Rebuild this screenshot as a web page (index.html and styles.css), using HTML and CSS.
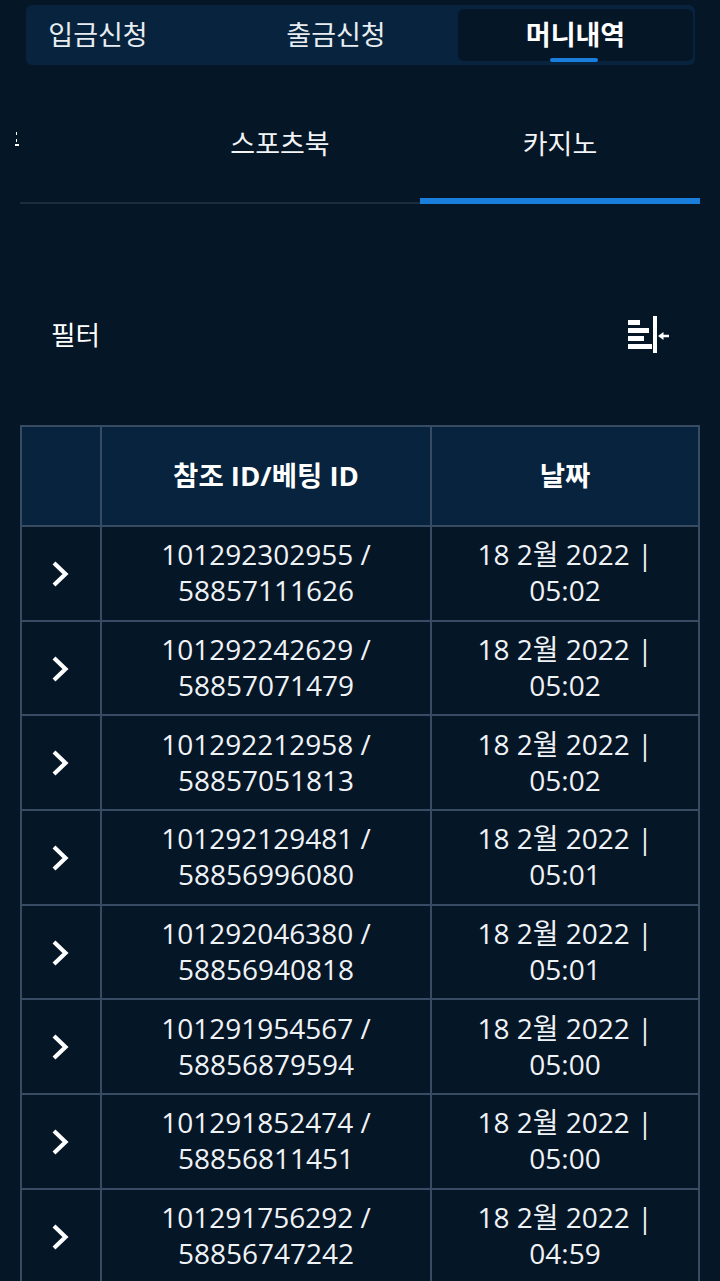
FILE: index.html
```html
<!DOCTYPE html>
<html lang="ko">
<head>
  <meta charset="UTF-8" />
  <title>머니내역</title>
  <link rel="stylesheet" href="styles.css">
</head>
<body>
  <nav class="topTabs">
    <a class="topTab first">입금신청</a>
    <a class="topTab second">출금신청</a>
    <a class="topTab active">머니내역</a>
  </nav>

  <nav class="subTabs">
    <a class="subTab clipped">
      <svg class="clipMark" width="5" height="16" viewBox="0 0 5 16"><path d="M1 0h1v3H1zM1 7h1v3H1zM0 12h4v2H0z" fill="#fff"/></svg>
    </a>
    <a class="subTab">스포츠북</a>
    <a class="subTab active">카지노</a>
  </nav>

  <div class="filterRow">
    <span class="filterLabel">필터</span>
    <svg width="41" height="37" viewBox="0 0 41 37">
      <g fill="#fff">
        <rect x="0" y="4" width="12" height="5"/>
        <rect x="0" y="12" width="21" height="5"/>
        <rect x="0" y="20" width="16" height="5"/>
        <rect x="0" y="28" width="24" height="5"/>
        <rect x="25" y="0" width="4" height="37"/>
        <path d="M30 20l5.500-4v2.700h5.500v2.600h-5.500v2.700z"/>
      </g>
    </svg>
  </div>

  <table class="betTable">
    <thead>
      <tr>
        <th class="arrowCol"></th>
        <th class="idCol">참조 ID/베팅 ID</th>
        <th>날짜</th>
      </tr>
    </thead>
    <tbody id="rows"></tbody>
  </table>

  <script>
    const rows = [
      ["101292302955", "58857111626", "05:02"],
      ["101292242629", "58857071479", "05:02"],
      ["101292212958", "58857051813", "05:02"],
      ["101292129481", "58856996080", "05:01"],
      ["101292046380", "58856940818", "05:01"],
      ["101291954567", "58856879594", "05:00"],
      ["101291852474", "58856811451", "05:00"],
      ["101291756292", "58856747242", "04:59"],
    ];
    const arrow = '<svg width="18" height="26" viewBox="0 0 18 26"><path d="M3 2L14.500 13 3 24" fill="none" stroke="#fff" stroke-width="4.200"/></svg>';
    document.getElementById("rows").innerHTML = rows.map((r) =>
      `<tr><td class="arrowCell">${arrow}</td><td>${r[0]} /<br>${r[1]}</td><td>18 2월 2022 |<br>${r[2]}</td></tr>`
    ).join("");
  </script>
</body>
</html>
```

FILE: styles.css
```css
html, body {
  height: 1281px;
  overflow: hidden;
}
body {
  margin: 0;
  background-color: #051627;
  color: #fff;
  font-family: "Open Sans", "Noto Sans CJK KR", sans-serif;
}
a {
  display: block;
}
.topTabs {
  display: flex;
  height: 60px;
  margin: 5px 25px 0 26px;
  padding: 4px 2px 4px 0;
  box-sizing: border-box;
  background-color: #07233e;
  border-radius: 6px;
  font-family: "Noto Sans CJK KR", sans-serif;
  font-size: 27px;
}
.topTab {
  line-height: 50px;
  text-align: center;
  color: #e8edf2;
}
.topTab.first {
  width: 144px;
}
.topTab.second {
  width: 288px;
  padding-left: 44px;
  box-sizing: border-box;
}
.topTab.active {
  position: relative;
  flex: 1;
  background-color: #051627;
  border-radius: 6px;
  color: #fff;
  font-weight: 700;
}
.topTab.active::after {
  content: "";
  position: absolute;
  left: 92px;
  bottom: -1px;
  width: 48px;
  height: 4px;
  border-radius: 2px;
  background-color: #1a7fdc;
}
.subTabs {
  display: flex;
  height: 120px;
  margin: 19px 20px 0;
  box-sizing: border-box;
  border-bottom: 2px solid #1c2c3e;
  font-family: "Noto Sans CJK KR", sans-serif;
  font-size: 27px;
}
.subTab {
  width: 280px;
  height: 120px;
  box-sizing: border-box;
  padding-top: 39px;
  line-height: 40px;
  text-align: center;
  color: #f2f4f6;
}
.subTab.clipped {
  width: 120px;
  padding-top: 48px;
  line-height: 0;
  text-align: left;
}
.clipMark {
  margin-left: -5px;
}
.subTab.active {
  border-bottom: 6px solid #1a7fdc;
}
.filterRow {
  display: flex;
  justify-content: space-between;
  align-items: center;
  margin: 110px 51px 0 51px;
  height: 40px;
  font-family: "Noto Sans CJK KR", sans-serif;
  font-size: 26.700px;
}
.filterLabel {
  padding-bottom: 2px;
}
.betTable {
  width: 680px;
  margin: 71px 0 0 20px;
  border-collapse: collapse;
  table-layout: fixed;
  font-size: 28px;
  line-height: 36px;
  text-align: center;
}
.betTable th, .betTable td {
  border: 2px solid #374b62;
  padding: 0;
}
.betTable th {
  height: 98px;
  background-color: #07233e;
  font-size: 27.500px;
  font-weight: 700;
}
.betTable td {
  height: 90.700px;
  padding-bottom: 2px;
  color: #f0f3f6;
}
.arrowCol {
  width: 78px;
}
.idCol {
  width: 328px;
}
.arrowCell {
  line-height: 0;
}
.arrowCell svg {
  margin-left: -2px;
  margin-top: 3px;
}
```
